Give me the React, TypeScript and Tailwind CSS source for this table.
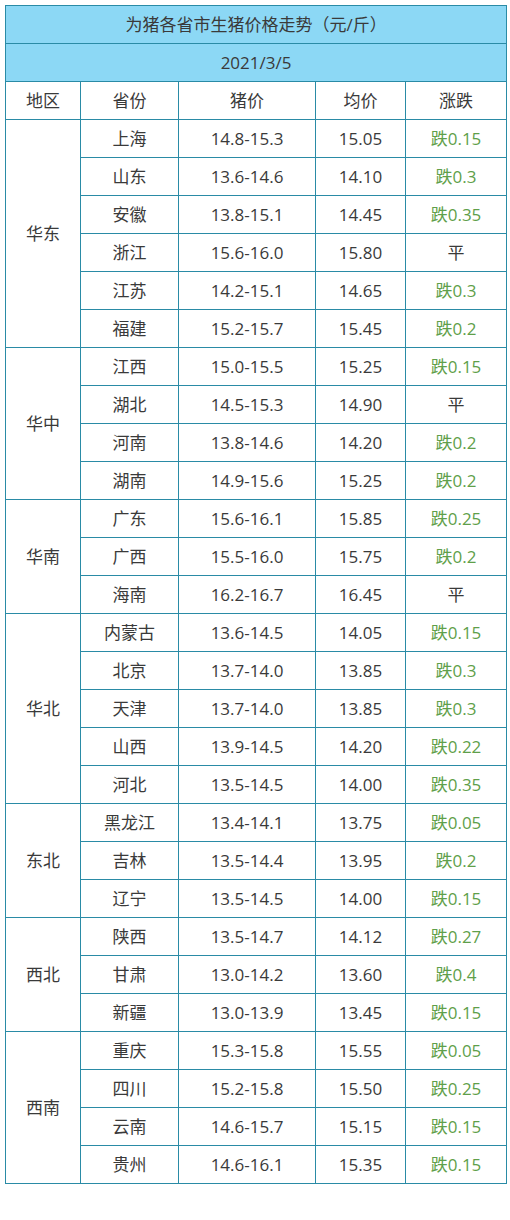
const rows: { region: string; items: [string, string, string, string][] }[] = [
  {
    region: '华东',
    items: [
      ['上海', '14.8-15.3', '15.05', '跌0.15'],
      ['山东', '13.6-14.6', '14.10', '跌0.3'],
      ['安徽', '13.8-15.1', '14.45', '跌0.35'],
      ['浙江', '15.6-16.0', '15.80', '平'],
      ['江苏', '14.2-15.1', '14.65', '跌0.3'],
      ['福建', '15.2-15.7', '15.45', '跌0.2'],
    ],
  },
  {
    region: '华中',
    items: [
      ['江西', '15.0-15.5', '15.25', '跌0.15'],
      ['湖北', '14.5-15.3', '14.90', '平'],
      ['河南', '13.8-14.6', '14.20', '跌0.2'],
      ['湖南', '14.9-15.6', '15.25', '跌0.2'],
    ],
  },
  {
    region: '华南',
    items: [
      ['广东', '15.6-16.1', '15.85', '跌0.25'],
      ['广西', '15.5-16.0', '15.75', '跌0.2'],
      ['海南', '16.2-16.7', '16.45', '平'],
    ],
  },
  {
    region: '华北',
    items: [
      ['内蒙古', '13.6-14.5', '14.05', '跌0.15'],
      ['北京', '13.7-14.0', '13.85', '跌0.3'],
      ['天津', '13.7-14.0', '13.85', '跌0.3'],
      ['山西', '13.9-14.5', '14.20', '跌0.22'],
      ['河北', '13.5-14.5', '14.00', '跌0.35'],
    ],
  },
  {
    region: '东北',
    items: [
      ['黑龙江', '13.4-14.1', '13.75', '跌0.05'],
      ['吉林', '13.5-14.4', '13.95', '跌0.2'],
      ['辽宁', '13.5-14.5', '14.00', '跌0.15'],
    ],
  },
  {
    region: '西北',
    items: [
      ['陕西', '13.5-14.7', '14.12', '跌0.27'],
      ['甘肃', '13.0-14.2', '13.60', '跌0.4'],
      ['新疆', '13.0-13.9', '13.45', '跌0.15'],
    ],
  },
  {
    region: '西南',
    items: [
      ['重庆', '15.3-15.8', '15.55', '跌0.05'],
      ['四川', '15.2-15.8', '15.50', '跌0.25'],
      ['云南', '14.6-15.7', '15.15', '跌0.15'],
      ['贵州', '14.6-16.1', '15.35', '跌0.15'],
    ],
  },
];

const cell = 'border border-[#2a8ba6] h-[38px] p-0 text-center align-middle';

export default function App() {
  return (
    <div
      className="w-[510px] h-[1220px] bg-white pt-[5px] pl-[5px] text-[17px] text-[#3a3a3a]"
      style={{ fontFamily: '"Open Sans", "Noto Sans CJK SC", sans-serif' }}
    >
      <table className="border-collapse w-[501px] table-fixed">
        <colgroup>
          <col className="w-[75px]" />
          <col className="w-[98px]" />
          <col className="w-[137px]" />
          <col className="w-[90px]" />
          <col className="w-[101px]" />
        </colgroup>
        <tbody>
          <tr>
            <td colSpan={5} className={`${cell} bg-[#8cd8f5]`}>
              为猪各省市生猪价格走势（元/斤）
            </td>
          </tr>
          <tr>
            <td colSpan={5} className={`${cell} bg-[#8cd8f5]`}>
              2021/3/5
            </td>
          </tr>
          <tr>
            <td className={cell}>地区</td>
            <td className={cell}>省份</td>
            <td className={cell}>猪价</td>
            <td className={cell}>均价</td>
            <td className={cell}>涨跌</td>
          </tr>
          {rows.map((g) =>
            g.items.map((it, i) => (
              <tr key={g.region + it[0]}>
                {i === 0 && (
                  <td rowSpan={g.items.length} className={cell}>
                    {g.region}
                  </td>
                )}
                <td className={cell}>{it[0]}</td>
                <td className={cell}>{it[1]}</td>
                <td className={cell}>{it[2]}</td>
                <td className={`${cell} ${it[3] === '平' ? '' : 'text-[#5f9f4a]'}`}>{it[3]}</td>
              </tr>
            ))
          )}
        </tbody>
      </table>
    </div>
  );
}
